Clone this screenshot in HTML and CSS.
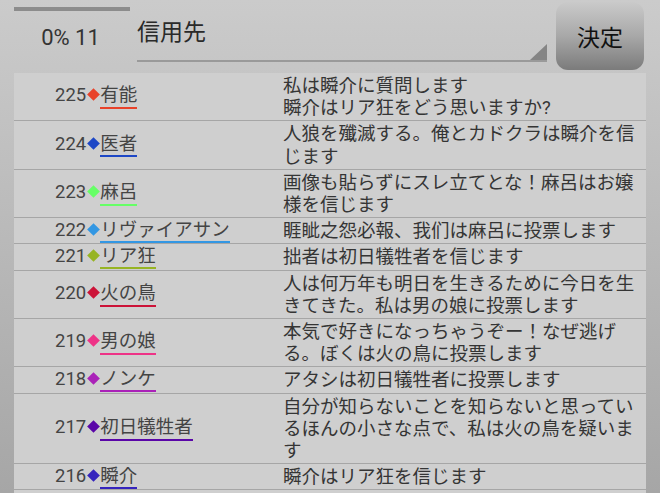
FILE: index.html
```html
<!DOCTYPE html>
<html lang="ja">
<head>
  <meta charset="UTF-8">
  <meta name="viewport" content="width=device-width, initial-scale=1.0">
  <title>投票</title>
  <link rel="stylesheet" href="styles.css">
</head>
<body>
  <div class="topbar">
    <div class="progress">
      <div class="progress-bar"></div>
      <div class="progress-text">0% 11</div>
    </div>
    <div class="picker">信用先</div>
    <button class="submit">決定</button>
  </div>

  <div class="posts">
    <div class="post">
      <div class="who"><span>225<i class="gem c-yuno"></i><span class="name c-yuno">有能</span></span></div>
      <div class="msg">私は瞬介に質問します<br>瞬介はリア狂をどう思いますか?</div>
    </div>
    <div class="post">
      <div class="who"><span>224<i class="gem c-doc"></i><span class="name c-doc">医者</span></span></div>
      <div class="msg">人狼を殲滅する。俺とカドクラは瞬介を信じます</div>
    </div>
    <div class="post">
      <div class="who"><span>223<i class="gem c-maro"></i><span class="name c-maro">麻呂</span></span></div>
      <div class="msg">画像も貼らずにスレ立てとな！麻呂はお嬢様を信じます</div>
    </div>
    <div class="post">
      <div class="who"><span>222<i class="gem c-levi"></i><span class="name c-levi">リヴァイアサン</span></span></div>
      <div class="msg">睚眦之怨必報、我们は麻呂に投票します</div>
    </div>
    <div class="post">
      <div class="who"><span>221<i class="gem c-riakyo"></i><span class="name c-riakyo">リア狂</span></span></div>
      <div class="msg">拙者は初日犠牲者を信じます</div>
    </div>
    <div class="post">
      <div class="who"><span>220<i class="gem c-phoenix"></i><span class="name c-phoenix">火の鳥</span></span></div>
      <div class="msg">人は何万年も明日を生きるために今日を生きてきた。私は男の娘に投票します</div>
    </div>
    <div class="post">
      <div class="who"><span>219<i class="gem c-otoko"></i><span class="name c-otoko">男の娘</span></span></div>
      <div class="msg">本気で好きになっちゃうぞー！なぜ逃げる。ぼくは火の鳥に投票します</div>
    </div>
    <div class="post">
      <div class="who"><span>218<i class="gem c-nonke"></i><span class="name c-nonke">ノンケ</span></span></div>
      <div class="msg">アタシは初日犠牲者に投票します</div>
    </div>
    <div class="post">
      <div class="who"><span>217<i class="gem c-victim"></i><span class="name c-victim">初日犠牲者</span></span></div>
      <div class="msg">自分が知らないことを知らないと思っているほんの小さな点で、私は火の鳥を疑います</div>
    </div>
    <div class="post">
      <div class="who"><span>216<i class="gem c-shun"></i><span class="name c-shun">瞬介</span></span></div>
      <div class="msg">瞬介はリア狂を信じます</div>
    </div>
  </div>
</body>
</html>
```

FILE: styles.css
```css
* { box-sizing: border-box; }
body { margin: 0; height: 493px; overflow: hidden; display: flex; flex-direction: column; background: linear-gradient(#cbcbcb, #a6a6a6); font-family: Roboto, "Noto Sans CJK JP", sans-serif; color: #353535; }

/* top bar */
.topbar { height: 73px; flex-shrink: 0; display: flex; padding-left: 14px; }
.progress { width: 116px; }
.progress-bar { height: 4px; margin-top: 7px; background: #8c8c8c; }
.progress-text { margin-top: 14px; padding-right: 3px; text-align: center; font-size: 22px; line-height: 26px; color: #333; }
.picker { position: relative; width: 410px; height: 62px; margin-left: 7px; padding-top: 18px; border-bottom: 2px solid #9a9a9a; font-size: 23px; line-height: 30px; color: #2a2a2a; }
.picker::after { content: ""; position: absolute; right: 0; bottom: 0; width: 17px; height: 16px; background: #858585; clip-path: polygon(100% 0, 100% 100%, 0 100%); }
.submit { width: 88px; height: 68px; margin: 2px 0 0 9px; border: none; border-radius: 12px; background: linear-gradient(#cacaca, #a8a8a8 50%, #7b7b7b); font-family: inherit; font-size: 23px; color: #111; padding: 0; }

/* list */
.posts { flex: 1; margin: 0 14px; background: #cfcfcf; }
.post { display: flex; border-bottom: 1px solid #a6a6a6; font-size: 18.5px; }
.who { width: 269px; flex-shrink: 0; padding-left: 41px; display: flex; align-items: center; color: #444; line-height: 22px; white-space: nowrap; }
.gem { display: inline-block; width: 9px; height: 9px; margin: 0 2px 0 3px; vertical-align: 2px; transform: rotate(45deg); background: currentColor; }
.name { display: inline-block; line-height: 1; padding-bottom: 2px; border-bottom: 2px solid; color: #444; }
.msg { flex: 1; padding: 2px 6px 1px 0; line-height: 22.2px; }

.gem.c-yuno { color: #e8422a; } .name.c-yuno { border-color: #e8422a; }
.gem.c-doc { color: #1d47c6; } .name.c-doc { border-color: #1d47c6; }
.gem.c-maro { color: #66ff66; } .name.c-maro { border-color: #66ff66; }
.gem.c-levi { color: #3397e3; } .name.c-levi { border-color: #3397e3; }
.gem.c-riakyo { color: #97b423; } .name.c-riakyo { border-color: #97b423; }
.gem.c-phoenix { color: #cc1338; } .name.c-phoenix { border-color: #cc1338; }
.gem.c-otoko { color: #ee3387; } .name.c-otoko { border-color: #ee3387; }
.gem.c-nonke { color: #aa22b8; } .name.c-nonke { border-color: #aa22b8; }
.gem.c-victim { color: #5a06a8; } .name.c-victim { border-color: #5a06a8; }
.gem.c-shun { color: #3524bd; } .name.c-shun { border-color: #3524bd; }
```
